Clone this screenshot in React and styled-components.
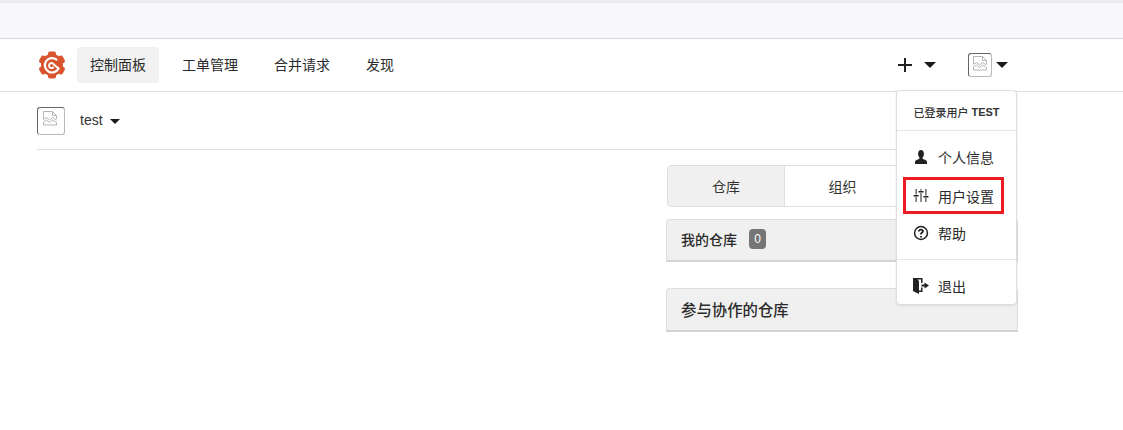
import React from "react";
import styled, { createGlobalStyle } from "styled-components";

const GlobalStyle = createGlobalStyle`
  * {
    box-sizing: border-box;
  }
  html, body {
    margin: 0;
    padding: 0;
    background: #fff;
  }
  body {
    font-family: "Liberation Sans", "Noto Sans CJK SC", sans-serif;
    font-size: 14px;
    color: #212121;
  }
`;

const Page = styled.div`
  width: 1123px;
  height: 430px;
  overflow: hidden;
  background: #fff;
`;

const TopStrip = styled.div`
  height: 39px;
  background: #f9f9fb;
  border-top: 3px solid #ececef;
  border-bottom: 1px solid #d9d8de;
`;

const Nav = styled.nav`
  display: flex;
  align-items: center;
  height: 53px;
  padding-left: 38px;
  border-bottom: 1px solid #dedede;
`;

const Logo = styled.svg`
  width: 28px;
  height: 28px;
  margin-right: 11px;
  flex: none;
`;

const NavItem = styled.a`
  display: flex;
  align-items: center;
  height: 36px;
  padding: 0 13px;
  margin-right: 10px;
  border-radius: 4px;
  background: ${(p) => (p.$active ? "#f1f1f1" : "transparent")};
  color: #2a2a2a;
  line-height: 1;
`;

const NavRight = styled.div`
  display: flex;
  align-items: center;
  margin-left: auto;
  width: 225px;
  height: 100%;
`;

const PlusMenu = styled.div`
  display: flex;
  align-items: center;
  gap: 12px;
  width: 70px;
`;

const PlusIcon = styled.svg`
  width: 14px;
  height: 14px;
  flex: none;
  fill: #212121;
`;

const UserMenu = styled.div`
  position: relative;
  display: flex;
  align-items: center;
  gap: 4px;
  height: 100%;
`;

const Caret = styled.svg`
  width: ${(p) => p.$w}px;
  height: ${(p) => Math.round(p.$w / 2)}px;
  flex: none;
  fill: #1b1b1b;
`;

const Avatar = styled.div`
  display: flex;
  align-items: center;
  justify-content: center;
  width: ${(p) => p.$size}px;
  height: ${(p) => p.$size}px;
  padding-bottom: ${(p) => (p.$size > 24 ? 5 : 2)}px;
  padding-right: ${(p) => (p.$size > 24 ? 3 : 0)}px;
  border: 1px solid #b9b9b9;
  border-top-color: #666;
  border-left-color: #666;
  border-radius: 3px;
  flex: none;
`;

const BrokenImg = styled.svg`
  width: 14px;
  height: 16px;
  fill: none;
  stroke: #b5b5b5;
  stroke-width: 1;
`;

const Dropdown = styled.div`
  position: absolute;
  top: 51px;
  left: -72px;
  width: 121px;
  height: 215px;
  background: #fff;
  border: 1px solid #dedede;
  border-radius: 4px;
  box-shadow: 0 1px 3px rgba(0, 0, 0, 0.08);
  z-index: 5;
`;

const DropHeader = styled.div`
  display: flex;
  align-items: center;
  justify-content: center;
  height: 40px;
  padding-top: 3px;
  border-bottom: 1px solid #e6e6e6;
  font-size: 11px;
  font-weight: 500;
  color: #333;
  white-space: nowrap;
`;

const HeaderName = styled.b`
  margin-left: 3px;
  font-weight: 700;
`;

const DropItem = styled.a`
  display: flex;
  align-items: center;
  gap: 9px;
  height: ${(p) => p.$h}px;
  margin: ${(p) => p.$top || 0}px 12px 0 6px;
  padding-left: ${(p) => (p.$marked ? 7 : 10)}px;
  border: ${(p) => (p.$marked ? "3px solid #ed1c24" : "none")};
  color: #2a2a2a;
  white-space: nowrap;
`;

const MenuIcon = styled.svg`
  width: 16px;
  height: 16px;
  flex: none;
  fill: #212121;
`;

const DropDivider = styled.div`
  height: 1px;
  margin-top: ${(p) => p.$top}px;
  margin-bottom: ${(p) => p.$bottom}px;
  background: #e6e6e6;
`;

const Content = styled.main`
  width: 981px;
  margin-left: 37px;
`;

const ContextBar = styled.div`
  display: flex;
  align-items: center;
  height: 58px;
  padding-top: 1px;
  border-bottom: 1px solid #dedede;
`;

const ContextName = styled.span`
  margin-left: 15px;
  margin-right: 7px;
  padding-bottom: 2px;
  color: #333;
`;

const Dashboard = styled.div`
  display: grid;
  grid-template-columns: 352px;
  justify-content: end;
  padding-top: 15px;
`;

const Tabs = styled.div`
  display: grid;
  grid-template-columns: repeat(3, 1fr);
  width: 350px;
  height: 42px;
  margin-left: 1px;
  border: 1px solid #dedede;
  border-radius: 4px;
  overflow: hidden;
`;

const Tab = styled.div`
  display: flex;
  align-items: center;
  justify-content: center;
  background: ${(p) => (p.$active ? "#f0f0f0" : "#fff")};
  color: #333;
  &:not(:first-child) {
    border-left: 1px solid #dedede;
  }
`;

const Panel = styled.section`
  display: flex;
  align-items: center;
  gap: 12px;
  height: ${(p) => p.$h}px;
  margin-top: ${(p) => p.$top}px;
  padding: 0 0 2px 14px;
  background: #f0f0f0;
  border: 1px solid #dedede;
  border-bottom: 2px solid #d4d4d4;
  border-radius: 4px 4px 0 0;
  font-weight: 500;
  color: #2b2b2b;
  font-size: ${(p) => p.$size}px;
`;

const Count = styled.span`
  display: flex;
  align-items: center;
  justify-content: center;
  width: 17px;
  height: 20px;
  background: #767676;
  border-radius: 4px;
  color: #fff;
  font-size: 12px;
  font-weight: 400;
`;

const GiteaLogo = () => (
  <Logo viewBox="0 0 28 28">
    <g fill="#d9532f">
      <circle cx="14" cy="14" r="11" />
      {[0, 60, 120, 180, 240, 300].map((a) => (
        <rect
          key={a}
          x="10"
          y="0.5"
          width="8"
          height="7"
          rx="2"
          transform={`rotate(${a} 14 14)`}
        />
      ))}
    </g>
    <path
      fill="none"
      stroke="#fff"
      strokeWidth="2.2"
      strokeLinecap="round"
      d="M18.500 8.600A7.200 7.200 0 1 0 20.500 17.500"
    />
    <path
      fill="none"
      stroke="#fff"
      strokeWidth="2"
      strokeLinecap="round"
      d="M20.500 17.500L15.800 13.400a2.500 2.500 0 1 0-.6 3.100"
    />
  </Logo>
);

const Broken = () => (
  <BrokenImg viewBox="0 0 14 16">
    <path d="M.5 8V.5h9l4 4V8M9.500.5v4h4" />
    <path d="M.5 8.500l3-2 3 2.500 3-2.500 4 2.500M.5 11l3-2 3 2.500 3-2.500 4 2.500v2.500H.5z" />
  </BrokenImg>
);

const Down = ({ w }) => (
  <Caret $w={w} viewBox="0 0 12 6">
    <path d="M0 0h12L6 6z" />
  </Caret>
);

const PersonIcon = () => (
  <MenuIcon viewBox="0 0 16 16">
    <path d="M8 1c1.800 0 2.900 1.600 2.900 3.800 0 1.600-.6 2.900-1.300 3.600v1.400l3.300 1.500c.7.300 1.100.9 1.100 1.700V15H2v-2c0-.8.400-1.400 1.100-1.700l3.300-1.500V8.400C5.700 7.700 5.100 6.400 5.100 4.800 5.100 2.600 6.200 1 8 1z" />
  </MenuIcon>
);

const SlidersIcon = () => (
  <MenuIcon viewBox="0 0 16 16">
    <path d="M2.600 1h1v5.500h-1zM2.600 9h1v5h-1zM7.500 1h1v1.500h-1zM7.500 5h1v9h-1zM12.400 1h1v6.500h-1zM12.400 10h1v4h-1z" />
    <path d="M.6 7h5v1.500h-5zM5.500 3h5v1.500h-5zM10.400 8h5v1.500h-5z" />
  </MenuIcon>
);

const HelpIcon = () => (
  <MenuIcon viewBox="0 0 16 16">
    <path
      fillRule="evenodd"
      d="M8 .8a7.200 7.200 0 1 1 0 14.400A7.200 7.200 0 0 1 8 .8zm0 1.500a5.700 5.700 0 1 0 0 11.400A5.700 5.700 0 0 0 8 2.300z"
    />
    <path d="M7.100 11h1.800v1.600H7.100zM8 3.700c1.700 0 2.900 1 2.900 2.400 0 1-.5 1.600-1.300 2.100-.5.300-.7.500-.7 1.200H7.100c0-1.300.4-1.900 1.200-2.400.5-.3.800-.5.800-.9 0-.4-.4-.7-1.100-.7-.7 0-1.200.3-1.300 1H5c.1-1.700 1.300-2.700 3-2.700z" />
  </MenuIcon>
);

const SignOutIcon = () => (
  <MenuIcon viewBox="0 0 16 16">
    <path d="M0 0h9.500v5H8V1.500H4.500L6 3v9.500h2V9.500h1.500V14H6v2L0 13z" />
    <path d="M11.500 4.500L16 7.500l-4.500 3V8.500H8.500v-2h3z" />
  </MenuIcon>
);

const App = () => (
  <Page>
    <GlobalStyle />
    <TopStrip />
    <Nav>
      <GiteaLogo />
      <NavItem $active>控制面板</NavItem>
      <NavItem>工单管理</NavItem>
      <NavItem>合并请求</NavItem>
      <NavItem>发现</NavItem>
      <NavRight>
        <PlusMenu>
          <PlusIcon viewBox="0 0 14 14">
            <path d="M6 0h2v6h6v2H8v6H6V8H0V6h6z" />
          </PlusIcon>
          <Down w={12} />
        </PlusMenu>
        <UserMenu>
          <Avatar $size={24}>
            <Broken />
          </Avatar>
          <Down w={12} />
          <Dropdown>
            <DropHeader>
              已登录用户<HeaderName>TEST</HeaderName>
            </DropHeader>
            <DropItem $h={46} $top={3}>
              <PersonIcon />
              个人信息
            </DropItem>
            <DropItem $h={37} $marked $top={-3}>
              <SlidersIcon />
              用户设置
            </DropItem>
            <DropItem $h={38}>
              <HelpIcon />
              帮助
            </DropItem>
            <DropDivider $top={7} $bottom={7} />
            <DropItem $h={38}>
              <SignOutIcon />
              退出
            </DropItem>
          </Dropdown>
        </UserMenu>
      </NavRight>
    </Nav>
    <Content>
      <ContextBar>
        <Avatar $size={28}>
          <Broken />
        </Avatar>
        <ContextName>test</ContextName>
        <Down w={10} />
      </ContextBar>
      <Dashboard>
        <div>
          <Tabs>
            <Tab $active>仓库</Tab>
            <Tab>组织</Tab>
            <Tab />
          </Tabs>
          <Panel $top={12} $size={14} $h={43}>
            我的仓库
            <Count>0</Count>
          </Panel>
          <Panel $top={26} $size={15.4} $h={44}>
            参与协作的仓库
          </Panel>
        </div>
      </Dashboard>
    </Content>
  </Page>
);

export default App;
